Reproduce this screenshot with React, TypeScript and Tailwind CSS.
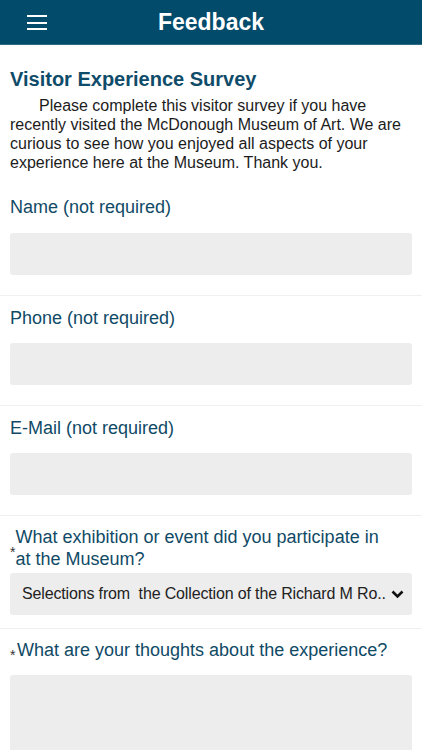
import { useState } from 'react';

type FieldProps = {
  label: string;
  value: string;
  onChange: (v: string) => void;
};

function TextField(props: FieldProps) {
  return (
    <div className="border-b border-[#f0f0f0] px-[10px] pt-[11px] pb-[20px]">
      <label className="block text-[18px] leading-[22px] text-[#104a66]">
        {props.label}
      </label>
      <input
        type="text"
        value={props.value}
        onChange={(e) => props.onChange(e.target.value)}
        className="mt-[14px] block h-[42px] w-full rounded-[3px] bg-[#ededed] px-3 text-[16px] text-[#222] outline-none"
      />
    </div>
  );
}

export default function App() {
  const [form, setForm] = useState({ name: '', phone: '', email: '', thoughts: '' });

  return (
    <div className="h-[750px] w-[422px] overflow-hidden bg-white font-['Liberation_Sans',Arial,sans-serif]">
      <header className="relative flex h-[45px] items-center justify-center border-b border-[#2f6a86] bg-[#034b6b]">
        <button type="button" aria-label="menu" className="absolute left-[27px] top-[15px] flex w-[20px] flex-col gap-[4.5px]">
          <span className="block h-[2px] w-full bg-white" />
          <span className="block h-[2px] w-full bg-white" />
          <span className="block h-[2px] w-full bg-white" />
        </button>
        <h1 className="text-[23px] font-bold text-white">Feedback</h1>
      </header>

      <div className="px-[10px] pt-[22px]">
        <h2 className="text-[20px] font-bold leading-[24px] text-[#0f4c6a]">Visitor Experience Survey</h2>
        <p className="mt-[5px] indent-[29px] text-[16px] leading-[19px] text-[#1c1c1c]">
          Please complete this visitor survey if you have recently visited the McDonough Museum of Art. We are
          curious to see how you enjoyed all aspects of your experience here at the Museum. Thank you.
        </p>
      </div>

      <div className="pt-[14px]">
        <div className="border-b border-[#f0f0f0] px-[10px] pt-[10px] pb-[20px]">
          <label className="block text-[18px] leading-[22px] text-[#104a66]">Name (not required)</label>
          <input
            type="text"
            value={form.name}
            onChange={(e) => setForm({ ...form, name: e.target.value })}
            className="mt-[15px] block h-[42px] w-full rounded-[3px] bg-[#ededed] px-3 text-[16px] outline-none"
          />
        </div>
        <TextField label="Phone (not required)" value={form.phone} onChange={(v) => setForm({ ...form, phone: v })} />
        <TextField label="E-Mail (not required)" value={form.email} onChange={(v) => setForm({ ...form, email: v })} />

        <div className="border-b border-[#f0f0f0] px-[10px] pt-[10px] pb-[13px]">
          <div className="flex items-center pr-[16px]">
            <span className="w-[7px] translate-y-[4px] text-[14px] leading-none text-[#333]">*</span>
            <label className="block text-[18px] leading-[22px] text-[#104a66]">
              What exhibition or event did you participate in at the Museum?
            </label>
          </div>
          <div className="mt-[3px] flex h-[42px] w-full items-center rounded-[3px] bg-[#ededed] pl-[12px] pr-[8px]">
            <span className="min-w-0 flex-1 overflow-hidden whitespace-pre text-[16px] tracking-[-0.15px] text-[#222]">
              Selections from  the Collection of the Richard M Ro..
            </span>
            <svg width="13" height="9" viewBox="0 0 13 9" className="shrink-0">
              <path d="M1.5 1.5 L6.5 6.5 L11.5 1.5" stroke="#111" strokeWidth="2.6" fill="none" />
            </svg>
          </div>
        </div>

        <div className="px-[10px] pt-[10px]">
          <div className="flex items-center">
            <span className="w-[7px] translate-y-[5px] text-[14px] leading-none text-[#333]">*</span>
            <label className="block text-[18px] leading-[22px] text-[#104a66]">
              What are your thoughts about the experience?
            </label>
          </div>
          <textarea
            value={form.thoughts}
            onChange={(e) => setForm({ ...form, thoughts: e.target.value })}
            className="mt-[14px] block h-[110px] w-full resize-none rounded-[3px] bg-[#ededed] p-3 text-[16px] outline-none"
          />
        </div>
      </div>
    </div>
  );
}
